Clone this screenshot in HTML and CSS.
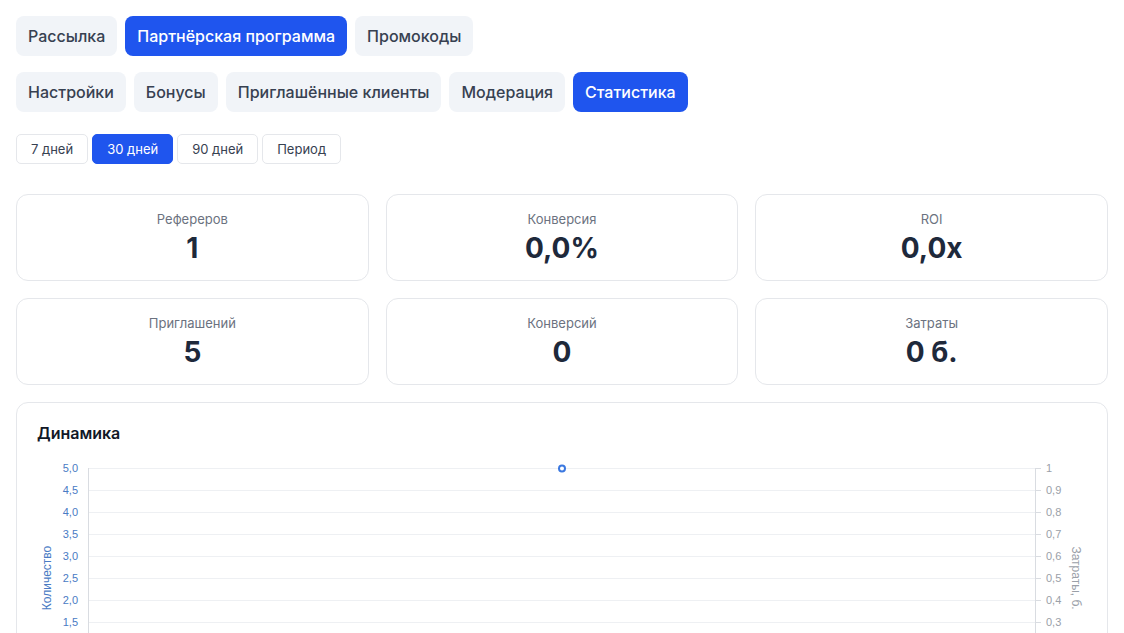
FILE: index.html
```html
<html>
  <head>
    <title>Партнёрская программа — статистика</title>
    <meta name="viewport" content="width=device-width, initial-scale=1">
    <link rel="stylesheet" href="styles.css">
  </head>
  <body>
    <div class="page">
      <div class="tabs">
        <button class="tab">Рассылка</button>
        <button class="tab active">Партнёрская программа</button>
        <button class="tab">Промокоды</button>
      </div>
      <div class="tabs">
        <button class="tab">Настройки</button>
        <button class="tab">Бонусы</button>
        <button class="tab">Приглашённые клиенты</button>
        <button class="tab">Модерация</button>
        <button class="tab active">Статистика</button>
      </div>
      <div class="periods">
        <button class="period">7 дней</button>
        <button class="period active">30 дней</button>
        <button class="period">90 дней</button>
        <button class="period">Период</button>
      </div>

      <div class="stats">
        <div class="stat"><div class="stat-label">Рефереров</div><div class="stat-value">1</div></div>
        <div class="stat"><div class="stat-label">Конверсия</div><div class="stat-value">0,0%</div></div>
        <div class="stat"><div class="stat-label">ROI</div><div class="stat-value">0,0x</div></div>
        <div class="stat"><div class="stat-label">Приглашений</div><div class="stat-value">5</div></div>
        <div class="stat"><div class="stat-label">Конверсий</div><div class="stat-value">0</div></div>
        <div class="stat"><div class="stat-label">Затраты</div><div class="stat-value">0 б.</div></div>
      </div>

      <div class="chart-card">
        <h3 class="chart-title">Динамика</h3>
        <svg class="chart" width="1050" height="300" viewBox="0 0 1050 300">
          <!-- grid -->
          <g stroke="#eef0f3" stroke-width="1">
            <line x1="51" y1="13.5" x2="998" y2="13.5"/>
            <line x1="51" y1="35.5" x2="998" y2="35.5"/>
            <line x1="51" y1="57.5" x2="998" y2="57.5"/>
            <line x1="51" y1="79.5" x2="998" y2="79.5"/>
            <line x1="51" y1="101.5" x2="998" y2="101.5"/>
            <line x1="51" y1="123.5" x2="998" y2="123.5"/>
            <line x1="51" y1="145.5" x2="998" y2="145.5"/>
            <line x1="51" y1="167.5" x2="998" y2="167.5"/>
            <line x1="51" y1="189.5" x2="998" y2="189.5"/>
          </g>
          <!-- axes -->
          <g stroke="#d9dce1" stroke-width="1">
            <line x1="51.5" y1="13" x2="51.5" y2="300"/>
            <line x1="998.5" y1="13" x2="998.5" y2="300"/>
            <line x1="998" y1="13.5" x2="1004" y2="13.5"/>
            <line x1="998" y1="35.5" x2="1004" y2="35.5"/>
            <line x1="998" y1="57.5" x2="1004" y2="57.5"/>
            <line x1="998" y1="79.5" x2="1004" y2="79.5"/>
            <line x1="998" y1="101.5" x2="1004" y2="101.5"/>
            <line x1="998" y1="123.5" x2="1004" y2="123.5"/>
            <line x1="998" y1="145.5" x2="1004" y2="145.5"/>
            <line x1="998" y1="167.5" x2="1004" y2="167.5"/>
          </g>
          <!-- left scale: count -->
          <g class="tick-left" text-anchor="end">
            <text x="41" y="17">5,0</text>
            <text x="41" y="39">4,5</text>
            <text x="41" y="61">4,0</text>
            <text x="41" y="83">3,5</text>
            <text x="41" y="105">3,0</text>
            <text x="41" y="127">2,5</text>
            <text x="41" y="149">2,0</text>
            <text x="41" y="171">1,5</text>
          </g>
          <text class="axis-title axis-title-left" transform="translate(14 123) rotate(-90)" text-anchor="middle">Количество</text>
          <!-- right scale: costs -->
          <g class="tick-right">
            <text x="1009" y="17">1</text>
            <text x="1009" y="39">0,9</text>
            <text x="1009" y="61">0,8</text>
            <text x="1009" y="83">0,7</text>
            <text x="1009" y="105">0,6</text>
            <text x="1009" y="127">0,5</text>
            <text x="1009" y="149">0,4</text>
            <text x="1009" y="171">0,3</text>
          </g>
          <text class="axis-title axis-title-right" transform="translate(1035 123) rotate(90)" text-anchor="middle">Затраты, б.</text>
          <!-- data point -->
          <circle cx="525" cy="13.5" r="3" fill="#fff" stroke="#3b78e0" stroke-width="2"/>
        </svg>
      </div>
    </div>
  </body>
</html>
```

FILE: styles.css
```css
* { box-sizing: border-box; }

body {
  margin: 0;
  background: #fff;
  font-family: Inter, "Noto Sans", sans-serif;
  color: #1e293b;
}

.page {
  padding: 16px;
}

button {
  font-family: inherit;
  cursor: pointer;
}

.tabs {
  display: flex;
  gap: 8px;
  margin-bottom: 16px;
}

.tab {
  height: 40px;
  padding: 0 12px;
  border: 0;
  border-radius: 8px;
  background: #f1f4f8;
  color: #374151;
  font-size: 16px;
  font-weight: 500;
}

.tab.active {
  background: #1f55ee;
  color: #fff;
}

.periods {
  display: flex;
  gap: 4px;
  margin-top: 22px;
  margin-bottom: 30px;
}

.period {
  height: 30px;
  padding: 0 14px;
  border: 1px solid #e5e7eb;
  border-radius: 5px;
  background: #fff;
  color: #374151;
  font-size: 13px;
}

.period.active {
  background: #1f55ee;
  border-color: #1f55ee;
  color: #fff;
}

.stats {
  display: grid;
  grid-template-columns: repeat(3, 1fr);
  gap: 17px;
  margin-bottom: 17px;
}

.stat {
  height: 87px;
  padding: 15px 16px;
  border: 1px solid #e5e7eb;
  border-radius: 12px;
  text-align: center;
}

.stat-label {
  font-size: 13px;
  line-height: 18px;
  color: #6b7280;
}

.stat-value {
  margin-top: 2px;
  font-size: 28px;
  line-height: 36px;
  font-weight: 700;
  color: #1e293b;
}

.chart-card {
  border: 1px solid #e5e7eb;
  border-radius: 12px;
  padding: 18px 20px 20px;
  height: 320px;
  overflow: hidden;
}

.chart-title {
  margin: 0 0 10px;
  font-size: 16px;
  line-height: 24px;
  font-weight: 600;
  color: #111827;
}

.chart {
  display: block;
  font-family: "Liberation Sans", Arial, sans-serif;
  font-size: 11px;
}

.axis-title {
  font-size: 12px;
}

.tick-left, .axis-title-left {
  fill: #4a7bc4;
}

.tick-right, .axis-title-right {
  fill: #9aa0a8;
}
```
